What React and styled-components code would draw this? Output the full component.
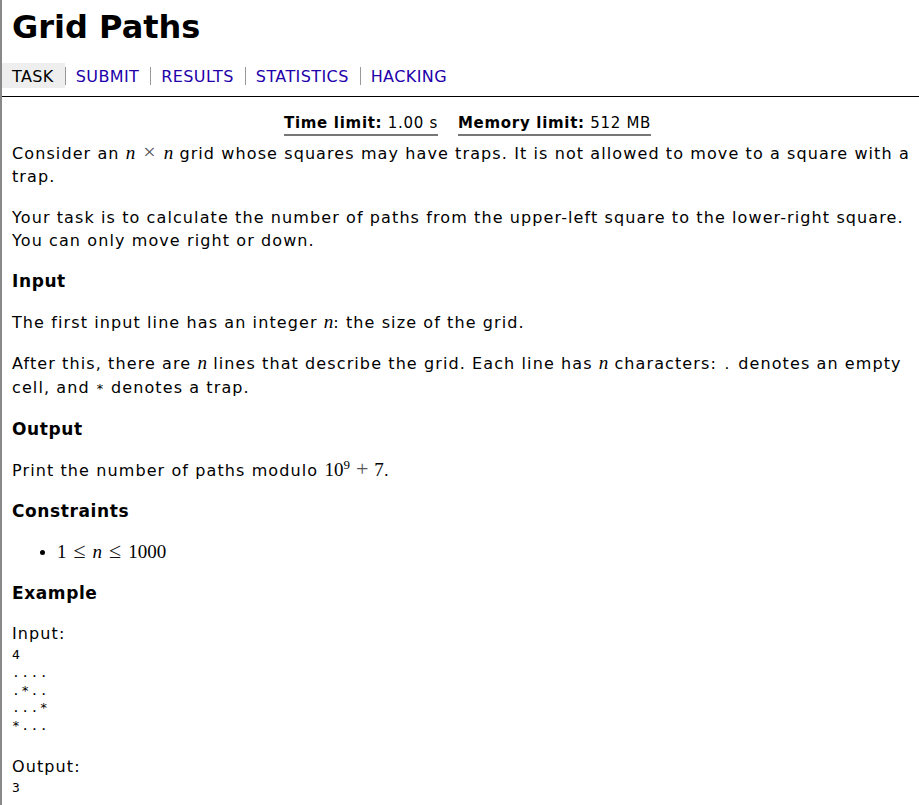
import styled, { createGlobalStyle } from "styled-components";

const GlobalStyle = createGlobalStyle`
  html, body {
    margin: 0;
    padding: 0;
    background: #fff;
  }
  body {
    font-family: "DejaVu Sans", Verdana, sans-serif;
    font-size: 16px;
    color: #000;
  }
`;

const Page = styled.div`
  min-height: 805px;
  border-left: 2px solid #888;
  box-sizing: border-box;
`;

const Header = styled.div`
  padding: 0 10px;
`;

const Title = styled.h1`
  margin: 0;
  padding-top: 8px;
  font-size: 32px;
  line-height: 38px;
  font-weight: bold;
`;

const Nav = styled.div`
  display: flex;
  align-items: center;
  margin-top: 17px;
  border-bottom: 1px solid #000;
  padding-bottom: 8px;
`;

const NavItem = styled.a`
  display: block;
  height: 20px;
  padding: 3px 11px 2px 10px;
  line-height: 21px;
  letter-spacing: 0.4px;
  color: ${(p) => (p.$current ? "#000" : "#2200aa")};
  background: ${(p) => (p.$current ? "#eee" : "transparent")};
  text-decoration: none;
`;

const NavSep = styled.span`
  width: 1px;
  height: 18px;
  background: #999;
`;

const Content = styled.div`
  padding: 0 5px 0 10px;
  letter-spacing: 1.1px;
`;

const Limits = styled.div`
  display: flex;
  justify-content: center;
  gap: 20px;
  margin-top: 16px;
  padding-left: 9px;
`;

const Limit = styled.span`
  border-bottom: 2px solid #777;
  padding-bottom: 1px;
  line-height: 20px;
  font-size: 15px;
  letter-spacing: 0.7px;
`;

const P = styled.p`
  margin: 6px 0 18px;
  line-height: 23px;
`;

const H = styled.h2`
  margin: 0 0 19px;
  font-size: 17px;
  font-weight: bold;
  line-height: 22px;
  letter-spacing: 0.6px;
`;

const M = styled.span`
  font-family: "Liberation Serif", "Times New Roman", serif;
  font-size: 19px;
  line-height: 0;
  letter-spacing: 0;
  font-style: ${(p) => (p.$i ? "italic" : "normal")};
`;

const Op = styled.span`
  font-family: "Liberation Serif", "Times New Roman", serif;
  font-size: 22px;
  line-height: 0;
  letter-spacing: 0;
  color: ${(p) => (p.$light ? "#555" : "#111")};
  margin: 0 ${(p) => p.$gap || 7}px;
`;

const Sup = styled.sup`
  font-size: 13px;
  font-family: "Liberation Serif", serif;
  letter-spacing: 0;
  vertical-align: 7px;
  line-height: 0;
`;

const Code = styled.code`
  font-family: "DejaVu Sans Mono", monospace;
  font-size: 13px;
`;

const List = styled.ul`
  margin: 0 0 18px;
  padding-left: 45px;
  line-height: 23px;
`;

const Label = styled.div`
  line-height: 21px;
  margin-bottom: 2px;
`;

const Pre = styled.pre`
  margin: 0 0 21px;
  font-family: "DejaVu Sans Mono", monospace;
  font-size: 13px;
  line-height: 17.75px;
  letter-spacing: 1.4px;
`;

const tabs = ["TASK", "SUBMIT", "RESULTS", "STATISTICS", "HACKING"];

export default function App() {
  return (
    <>
      <GlobalStyle />
      <Page>
        <Header>
          <Title>Grid Paths</Title>
        </Header>
        <Nav>
          {tabs.map((t, i) => [
            i > 0 && <NavSep key={t + "-sep"} />,
            <NavItem key={t} href="#" $current={i === 0}>
              {t}
            </NavItem>,
          ])}
        </Nav>
        <Content>
          <Limits>
            <Limit>
              <b>Time limit:</b> 1.00 s
            </Limit>
            <Limit>
              <b>Memory limit:</b> 512 MB
            </Limit>
          </Limits>
          <P>
            Consider an <M $i>n</M>
            <Op $light $gap={8}>×</Op>
            <M $i>n</M> grid whose squares may have traps. It is not allowed to move to a square
            with a trap.
          </P>
          <P>
            Your task is to calculate the number of paths from the upper-left square to the
            lower-right square. You can only move right or down.
          </P>
          <H>Input</H>
          <P>
            The first input line has an integer <M $i>n</M>: the size of the grid.
          </P>
          <P>
            After this, there are <M $i>n</M> lines that describe the grid. Each line has{" "}
            <M $i>n</M> characters: <Code>.</Code> denotes an empty cell, and <Code>*</Code>{" "}
            denotes a trap.
          </P>
          <H>Output</H>
          <P>
            Print the number of paths modulo <M>10</M>
            <Sup>9</Sup>
            <Op $light $gap={6}>+</Op>
            <M>7</M>.
          </P>
          <H>Constraints</H>
          <List>
            <li>
              <M>1</M>
              <Op>≤</Op>
              <M $i>n</M>
              <Op>≤</Op>
              <M>1000</M>
            </li>
          </List>
          <H>Example</H>
          <Label>Input:</Label>
          <Pre>{`4
....
.*..
...*
*...`}</Pre>
          <Label>Output:</Label>
          <Pre>3</Pre>
        </Content>
      </Page>
    </>
  );
}
